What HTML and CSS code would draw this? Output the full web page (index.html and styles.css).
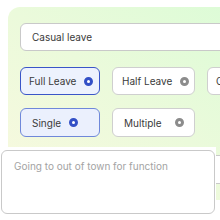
FILE: index.html
```html
<!DOCTYPE html>
<html>
<head>
<meta charset="utf-8">
<link rel="stylesheet" href="styles.css">
</head>
<body>
<div class="card">
  <div class="field">Casual leave</div>
  <div class="row row1">
    <div class="opt on">Full Leave <span class="dot"></span></div>
    <div class="opt">Half Leave <span class="dot"></span></div>
    <div class="opt">Compensatory <span class="dot"></span></div>
  </div>
  <div class="row row2">
    <div class="opt on soft">Single <span class="dot"></span></div>
    <div class="opt">Multiple <span class="dot"></span></div>
  </div>
  <div class="field field2"></div>
</div>
<div class="overlay">
  <div class="area">Going to out of town for function</div>
</div>
</body>
</html>
```
FILE: styles.css
```css
* { box-sizing: border-box; }
html, body { margin: 0; padding: 0; background: #fff; overflow: hidden; }
body { width: 220px; height: 220px; position: relative; font-family: Inter, "Noto Sans", sans-serif; font-size: 10px; color: #3a3a3a; }
.card {
  margin: 7px 0 0 8px;
  width: 260px;
  height: 193px;
  border-radius: 12px 0 0 12px;
  background: linear-gradient(to top right, #f9f9df 0%, #ebfadb 50%, #dafcd6 100%);
  padding: 16px 0 0 12px;
  display: flex;
  flex-direction: column;
}
.field {
  height: 28px;
  width: 240px;
  background: #fff;
  border: 1px solid #c9c9c9;
  border-radius: 6px;
  padding-left: 11px;
  display: flex;
  align-items: center;
}
.row { display: flex; gap: 12px; }
.row1 { margin-top: 16px; }
.row2 { margin-top: 13px; }
.field2 { margin-top: 18px; height: 29px; }
.opt {
  height: 28px;
  background: #fff;
  border: 1px solid #cfcfcf;
  border-radius: 6px;
  display: flex;
  align-items: center;
  gap: 8px;
  padding: 0 8px;
  white-space: nowrap;
  flex-shrink: 0;
}
.row1 .opt:nth-child(1) { width: 80px; }
.row1 .opt:nth-child(2) { width: 83px; padding-left: 9px; }
.row2 .opt { width: 80px; justify-content: space-between; padding: 0 21px 0 11px; height: 29px; }
.row2 .opt:nth-child(2) { width: 83px; padding-right: 10px; }
.dot {
  width: 9px; height: 9px; border-radius: 50%;
  border: 3px solid #8c8c8c;
  background: #fff;
  flex-shrink: 0;
}
.opt.on { background: #edf2fd; border-color: #3a55c8; }
.opt.on.soft { border-color: #6f88da; background: #ebf0fd; }
.opt.on .dot { border-color: #3350c6; }
.overlay {
  position: absolute;
  left: 0; top: 147px;
  width: 216px; height: 73px;
  background: #fff;
  padding: 3px 1px 0 1px;
}
.area {
  height: 64px;
  border: 1px solid #c9c9c9;
  border-radius: 6px;
  padding: 9px 0 0 12px;
  color: #a3a3a3;
}
```
